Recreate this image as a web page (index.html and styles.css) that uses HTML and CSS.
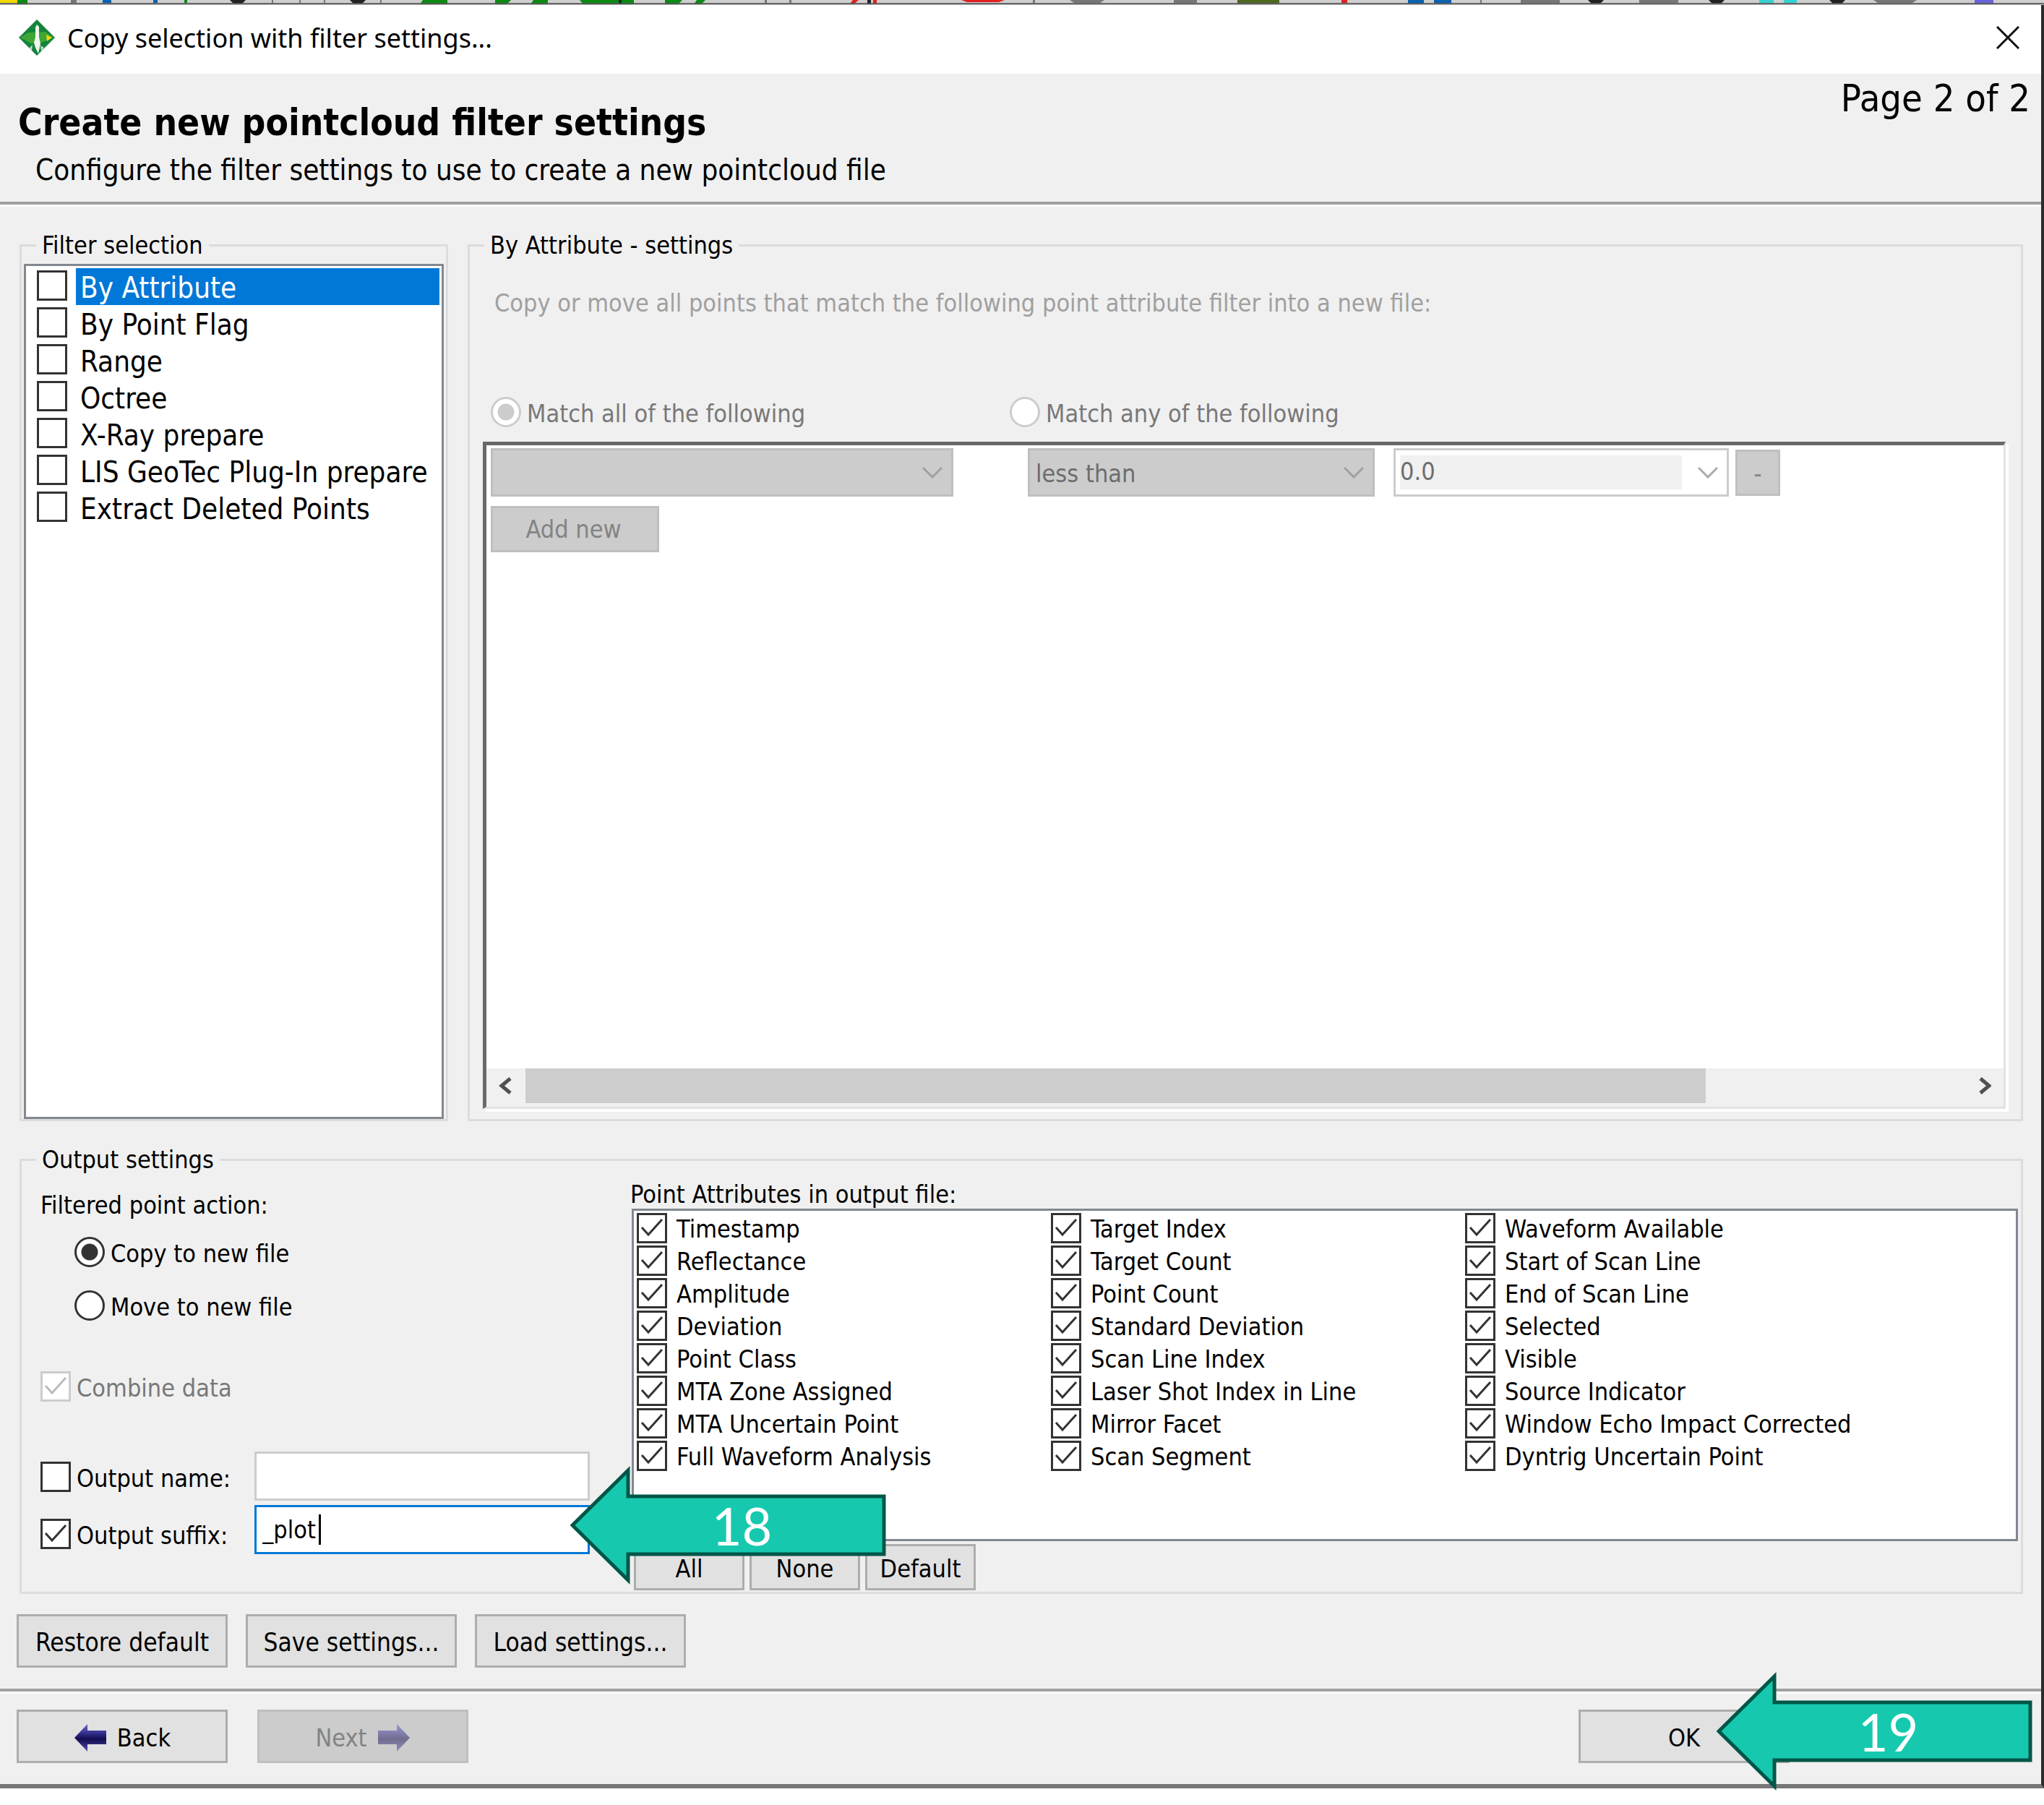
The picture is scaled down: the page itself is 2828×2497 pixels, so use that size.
FILE: index.html
```html
<!DOCTYPE html>
<html lang="en">
<head>
<meta charset="utf-8">
<title>Copy selection with filter settings...</title>
<link rel="stylesheet" href="styles.css">
</head>
<body>
<svg class="app-toolbar" viewBox="0 0 2828 7" preserveAspectRatio="none" aria-hidden="true">
  <rect width="2828" height="7" fill="#cfcfcf"/>
  <path fill="#f2d800" d="M0 0h24v4H0z"/>
  <path fill="#0a8a12" d="M24 0h14v6H24zM255 0h4v4h-4zM585 0h34v6h-38zM685 0h22l-6 6h-16zM738 0h20v6h-24zM802 0h75v6h-70zM920 0h24l-6 6h-18zM964 0h12l-6 6h-10z"/>
  <path fill="#222" d="M318 0h22l-5 5h-12zM484 0h22l-5 5h-12zM856 0h4v6h-4zM1200 0h5v6h-5zM2197 0h22l-5 5h-12zM2364 0h22l-5 5h-12zM2531 0h22l-5 5h-12z"/>
  <path fill="#777" d="M98 0h8v4h-8zM376 0h2v4h-2zM414 0h2v4h-2zM448 0h2v4h-2zM526 0h2v4h-2zM1058 0h3v4h-3zM1092 0h3v4h-3zM1429 0h3v4h-3zM1480 0h48l-6 4h-36zM1624 0h32v4h-32zM2048 0h2v4h-2zM2104 0h54v4h-54zM2268 0h54v4h-54zM2592 0h60l-6 4h-48z"/>
  <path fill="#e02020" d="M1180 0h8l-6 5h-6zM1208 0h5v5h-5zM1330 0h60l-8 3h-44zM1856 0h8v4h-8z"/>
  <path fill="#4d6820" d="M1712 0h58v5h-58z"/>
  <path fill="#0b62b0" d="M142 0h12v4h-12zM212 0h6v4h-6zM1948 0h22v5h-22zM1984 0h24v5h-24z"/>
  <path fill="#35d0d0" d="M2434 0h20v4h-20zM2468 0h18v4h-18z"/>
  <path fill="#6a62d8" d="M2732 0h26v5h-26z"/>
  <rect y="4" width="2828" height="2" fill="#555" opacity=".85"/>
  <rect y="6" width="2828" height="1" fill="#bbb"/>
</svg>

<main class="dialog">
  <header class="titlebar">
    <svg class="app-icon" viewBox="0 0 52 52" aria-hidden="true">
      <path d="M26 1 51 26 26 51 1 26z" fill="#14833c"/>
      <path d="M3 26 14 19 38 18 49 26 30 34H18z" fill="#3fa535"/>
      <path d="M39 22l8 4-7 5z" fill="#e8d80e"/>
      <path d="M26 8l3 3v14l2 10-3 13-4-8-2-7 2-8V12z" fill="#eef6ee"/>
      <path d="M20 36l-5 5 4 3zM31 37l5 3-4 5z" fill="#b9dcbc"/>
    </svg>
    <span class="titlebar-text">Copy selection with filter settings...</span>
    <button class="close" type="button" aria-label="Close">
      <svg viewBox="0 0 32 32" aria-hidden="true"><path d="M1 1 31 31M31 1 1 31" fill="none" stroke="#111" stroke-width="3"/></svg>
    </button>
  </header>

  <section class="heading">
    <div class="heading-text">
      <h1>Create new pointcloud filter settings</h1>
      <p>Configure the filter settings to use to create a new pointcloud file</p>
    </div>
    <span class="page-count">Page 2 of 2</span>
  </section>
  <hr class="rule">

  <form class="content">
    <div class="filters">
      <fieldset class="group filter-group">
        <legend>Filter selection</legend>
        <ul class="filter-list">
          <li class="selected"><input type="checkbox" id="f1"><label for="f1">By Attribute</label></li>
          <li><input type="checkbox" id="f2"><label for="f2">By Point Flag</label></li>
          <li><input type="checkbox" id="f3"><label for="f3">Range</label></li>
          <li><input type="checkbox" id="f4"><label for="f4">Octree</label></li>
          <li><input type="checkbox" id="f5"><label for="f5">X-Ray prepare</label></li>
          <li><input type="checkbox" id="f6"><label for="f6">LIS GeoTec Plug-In prepare</label></li>
          <li><input type="checkbox" id="f7"><label for="f7">Extract Deleted Points</label></li>
        </ul>
      </fieldset>

      <fieldset class="group attribute-group">
        <legend>By Attribute - settings</legend>
        <p class="hint">Copy or move all points that match the following point attribute filter into a new file:</p>
        <div class="match">
          <span class="option"><input type="radio" name="match" id="m1" checked disabled><label for="m1">Match all of the following</label></span>
          <span class="option"><input type="radio" name="match" id="m2" disabled><label for="m2">Match any of the following</label></span>
        </div>
        <div class="conditions">
          <div class="condition">
            <select class="combo attribute" aria-label="Attribute" disabled><option></option></select>
            <select class="combo operator" aria-label="Comparison" disabled><option>less than</option></select>
            <div class="combo-edit">
              <input type="text" value="0.0" aria-label="Value" disabled>
              <svg viewBox="0 0 28 16" aria-hidden="true"><path d="M1 1 14 14 27 1" fill="none" stroke="#aaa" stroke-width="3"/></svg>
            </div>
            <button class="btn minus" type="button" disabled>-</button>
          </div>
          <button class="btn add" type="button" disabled>Add new</button>
          <div class="scrollbar">
            <button type="button" aria-label="Scroll left"><svg viewBox="0 0 20 24" aria-hidden="true"><path d="M16 2 4 12 16 22" fill="none" stroke="#505050" stroke-width="5"/></svg></button>
            <div class="track"><div class="thumb"></div></div>
            <button type="button" aria-label="Scroll right"><svg viewBox="0 0 20 24" aria-hidden="true"><path d="M5 2 17 12 5 22" fill="none" stroke="#505050" stroke-width="5"/></svg></button>
          </div>
        </div>
      </fieldset>
    </div>

    <fieldset class="group output-group">
      <legend>Output settings</legend>
      <div class="output">
        <div class="output-left">
          <p class="caption">Filtered point action:</p>
          <div class="actions">
            <span class="option"><input type="radio" name="action" id="a1" checked><label for="a1">Copy to new file</label></span>
            <span class="option"><input type="radio" name="action" id="a2"><label for="a2">Move to new file</label></span>
          </div>
          <span class="option combine"><input type="checkbox" id="combine" checked disabled><label for="combine">Combine data</label></span>
          <div class="field">
            <span class="option"><input type="checkbox" id="on"><label for="on">Output name:</label></span>
            <input class="text" type="text" aria-label="Output name">
          </div>
          <div class="field suffix">
            <span class="option"><input type="checkbox" id="os" checked><label for="os">Output suffix:</label></span>
            <span class="text focused"><input type="text" value="_plot" size="4" aria-label="Output suffix"><i class="caret"></i></span>
            <div class="callout callout-suffix">
              <svg viewBox="0 0 437 168" aria-hidden="true"><path d="M3 84 80 8V44H434V124H80V160z" fill="#16c9ae" stroke="#005648" stroke-width="5"/></svg>
              <span>18</span>
            </div>
          </div>
        </div>

        <div class="output-right">
          <p class="caption">Point Attributes in output file:</p>
          <div class="attributes">
            <div class="column">
              <span class="option"><input type="checkbox" id="p1" checked><label for="p1">Timestamp</label></span>
              <span class="option"><input type="checkbox" id="p2" checked><label for="p2">Reflectance</label></span>
              <span class="option"><input type="checkbox" id="p3" checked><label for="p3">Amplitude</label></span>
              <span class="option"><input type="checkbox" id="p4" checked><label for="p4">Deviation</label></span>
              <span class="option"><input type="checkbox" id="p5" checked><label for="p5">Point Class</label></span>
              <span class="option"><input type="checkbox" id="p6" checked><label for="p6">MTA Zone Assigned</label></span>
              <span class="option"><input type="checkbox" id="p7" checked><label for="p7">MTA Uncertain Point</label></span>
              <span class="option"><input type="checkbox" id="p8" checked><label for="p8">Full Waveform Analysis</label></span>
            </div>
            <div class="column">
              <span class="option"><input type="checkbox" id="p9" checked><label for="p9">Target Index</label></span>
              <span class="option"><input type="checkbox" id="p10" checked><label for="p10">Target Count</label></span>
              <span class="option"><input type="checkbox" id="p11" checked><label for="p11">Point Count</label></span>
              <span class="option"><input type="checkbox" id="p12" checked><label for="p12">Standard Deviation</label></span>
              <span class="option"><input type="checkbox" id="p13" checked><label for="p13">Scan Line Index</label></span>
              <span class="option"><input type="checkbox" id="p14" checked><label for="p14">Laser Shot Index in Line</label></span>
              <span class="option"><input type="checkbox" id="p15" checked><label for="p15">Mirror Facet</label></span>
              <span class="option"><input type="checkbox" id="p16" checked><label for="p16">Scan Segment</label></span>
            </div>
            <div class="column">
              <span class="option"><input type="checkbox" id="p17" checked><label for="p17">Waveform Available</label></span>
              <span class="option"><input type="checkbox" id="p18" checked><label for="p18">Start of Scan Line</label></span>
              <span class="option"><input type="checkbox" id="p19" checked><label for="p19">End of Scan Line</label></span>
              <span class="option"><input type="checkbox" id="p20" checked><label for="p20">Selected</label></span>
              <span class="option"><input type="checkbox" id="p21" checked><label for="p21">Visible</label></span>
              <span class="option"><input type="checkbox" id="p22" checked><label for="p22">Source Indicator</label></span>
              <span class="option"><input type="checkbox" id="p23" checked><label for="p23">Window Echo Impact Corrected</label></span>
              <span class="option"><input type="checkbox" id="p24" checked><label for="p24">Dyntrig Uncertain Point</label></span>
            </div>
          </div>
          <div class="presets">
            <button class="btn" type="button">All</button>
            <button class="btn" type="button">None</button>
            <button class="btn" type="button">Default</button>
          </div>
        </div>
      </div>
    </fieldset>

    <div class="settings-bar">
      <button class="btn wide" type="button">Restore default</button>
      <button class="btn wide" type="button">Save settings...</button>
      <button class="btn wide" type="button">Load settings...</button>
    </div>
  </form>

  <hr class="rule">
  <footer class="nav">
    <button class="btn wide" type="button">
      <svg class="arrow" viewBox="0 0 46 40" aria-hidden="true">
        <defs><linearGradient id="navy" x2="0" y2="1"><stop offset="0" stop-color="#6b66c4"/><stop offset=".3" stop-color="#3a3596"/><stop offset=".55" stop-color="#120c50"/><stop offset="1" stop-color="#5550b4"/></linearGradient></defs>
        <path d="M1 20 19 1v9h26v19H19v10z" fill="url(#navy)"/>
      </svg>
      Back
    </button>
    <button class="btn wide" type="button" disabled>
      Next
      <svg class="arrow" viewBox="0 0 46 40" aria-hidden="true">
        <path d="M45 20 27 1v9H1v19h26v10z" fill="url(#navy)" opacity=".5"/>
      </svg>
    </button>
    <button class="btn wide ok" type="button">OK</button>
    <div class="callout callout-ok">
      <svg viewBox="0 0 437 168" aria-hidden="true"><path d="M3 84 80 8V44H434V124H80V160z" fill="#16c9ae" stroke="#005648" stroke-width="5"/></svg>
      <span>19</span>
    </div>
  </footer>
</main>
</body>
</html>
```
FILE: styles.css
```css
:root {
  --face: #f0f0f0;
  --group-line: #dcdcdc;
  --list-line: #828790;
  --accent: #0078d7;
  --ui: "DejaVu Sans Condensed", "DejaVu Sans", sans-serif;
}

* { box-sizing: border-box; }

body {
  margin: 0;
  min-height: 100vh;
  padding-bottom: 23px;
  display: flex;
  flex-direction: column;
  background: #fff;
  color: #000;
  font: 34px/40px var(--ui);
}

p, h1, ul { margin: 0; padding: 0; }
input, button, select { font: inherit; color: inherit; margin: 0; }

.app-toolbar { display: block; width: 100%; height: 7px; }

.dialog {
  flex: 1;
  display: flex;
  flex-direction: column;
  background: var(--face);
  border-right: 4px solid #2b2b2b;
  border-bottom: 6px solid #777;
}

/* Title bar */
.titlebar {
  display: flex;
  align-items: center;
  height: 95px;
  padding: 0 30px 6px 25px;
  background: #fff;
}
.app-icon { width: 52px; height: 52px; margin-right: 16px; }
.titlebar-text { flex: 1; font: 36px/48px "Noto Sans", sans-serif; padding-top: 2px; }
.close { width: 32px; height: 32px; padding: 0; border: 0; background: none; }
.close svg { display: block; width: 32px; height: 32px; }

/* Heading */
.heading {
  display: flex;
  justify-content: space-between;
  height: 177px;
  padding: 0 15px 0 25px;
}
.heading-text { padding-top: 38px; }
h1 { font-size: 51px; line-height: 60px; font-weight: bold; }
.heading-text p { padding: 10px 0 0 24px; font-size: 40px; line-height: 50px; }
.page-count { font-size: 52px; line-height: 64px; padding-top: 2px; }

.rule {
  width: 100%;
  height: 7px;
  margin: 0;
  border: 0;
  border-top: 4px solid #a0a0a0;
  background: #fff;
}

/* Groups */
.content { flex: 1; display: flex; flex-direction: column; padding: 33px 25px 29px 23px; }
.group { --pad: 3px; margin: 0; border: 3px solid var(--group-line); min-width: 0; }
.group legend { margin-left: calc(20px - var(--pad)); padding: 0 8px; line-height: 40px; }
.filters { flex: 1; display: flex; gap: 27px; margin-left: 4px; }

.filter-group { width: 593px; display: flex; padding: 6px 3px 0 var(--pad); }
.filter-list {
  flex: 1;
  min-width: 0;
  padding: 3px 3px 2px;
  list-style: none;
  background: #fff;
  border: 3px solid var(--list-line);
  font-size: 40px;
}
.filter-list li { display: flex; gap: 12px; height: 51px; padding-left: 12px; }
.filter-list input { margin-top: 3px; }
.filter-list label { flex: 1; padding-left: 6px; line-height: 55px; overflow: hidden; white-space: nowrap; }
.filter-list .selected label { background: var(--accent); color: #fff; }

.attribute-group { --pad: 18px; flex: 1; display: flex; flex-direction: column; padding: 40px 17px 10px var(--pad); }
.hint { padding-left: 16px; color: #a0a0a0; }
.match { display: grid; grid-template-columns: 718px 1fr; padding: 110px 0 20px 11px; }

/* Check boxes and radios */
.option { display: flex; align-items: center; }
.option label { padding: 3px 0 0 8px; line-height: 36px; white-space: nowrap; }
input[type="checkbox"], input[type="radio"] {
  appearance: none;
  flex: none;
  width: 42px;
  height: 42px;
  border: 3px solid #333;
  background: #fff center / 36px 36px no-repeat;
}
input[type="radio"] { border-radius: 50%; }
input[type="checkbox"]:checked {
  background-image: url("data:image/svg+xml,%3Csvg xmlns='http://www.w3.org/2000/svg' viewBox='0 0 36 36'%3E%3Cpath d='M4 17l9 10L32 6' fill='none' stroke='%23333' stroke-width='3'/%3E%3C/svg%3E");
}
input[type="radio"]:checked { background-image: radial-gradient(circle, #333 11px, transparent 12px); }
input:disabled + label { color: #787878; }
input[type="checkbox"]:disabled, input[type="radio"]:disabled { border-color: #ccc; }
input[type="checkbox"]:disabled:checked {
  background-image: url("data:image/svg+xml,%3Csvg xmlns='http://www.w3.org/2000/svg' viewBox='0 0 36 36'%3E%3Cpath d='M4 17l9 10L32 6' fill='none' stroke='%23bbb' stroke-width='3'/%3E%3C/svg%3E");
}
input[type="radio"]:disabled:checked { background-image: radial-gradient(circle, #ccc 11px, transparent 12px); }

/* Conditions box */
.conditions {
  flex: 1;
  display: flex;
  flex-direction: column;
  align-items: flex-start;
  padding-top: 4px;
  background: #fff;
  border: solid;
  border-width: 5px 3px 3px 5px;
  border-color: #696969 #e3e3e3 #e3e3e3 #696969;
  box-shadow: 4px 4px 0 #fff;
  margin-right: 4px;
  margin-bottom: 4px;
}
.condition { display: flex; align-items: center; padding-left: 6px; margin-bottom: 13px; }
.combo {
  appearance: none;
  height: 67px;
  padding: 2px 8px 0;
  border: 3px solid #bfbfbf;
  border-radius: 0;
  opacity: 1;
  color: #6d6d6d;
  background: #ccc url("data:image/svg+xml,%3Csvg xmlns='http://www.w3.org/2000/svg' viewBox='0 0 28 16'%3E%3Cpath d='M1 1 14 14 27 1' fill='none' stroke='%23a0a0a0' stroke-width='3'/%3E%3C/svg%3E") right 12px center / 28px 16px no-repeat;
}
.attribute { width: 640px; margin-right: 103px; }
.operator { width: 480px; margin-right: 26px; }
.combo-edit {
  display: flex;
  align-items: center;
  justify-content: space-between;
  width: 464px;
  height: 67px;
  padding: 0 12px 0 6px;
  border: 3px solid #ccc;
  background: #fff;
}
.combo-edit input { width: 390px; height: 47px; padding: 0 0 3px; border: 0; background: var(--face); color: #6d6d6d; }
.combo-edit svg { width: 28px; height: 16px; }

.scrollbar { display: flex; width: 100%; height: 53px; margin-top: auto; padding-bottom: 5px; background: var(--face); }
.scrollbar button { width: 54px; padding: 0; border: 0; background: none; }
.scrollbar svg { display: block; width: 20px; height: 24px; margin: 0 auto; }
.track { flex: 1; display: flex; }
.thumb { width: 82%; background: #cdcdcd; }

/* Buttons */
.btn {
  display: flex;
  align-items: center;
  justify-content: center;
  height: 64px;
  padding: 3px 0 0;
  border: 3px solid #adadad;
  border-radius: 0;
  background: #e1e1e1;
}
.btn:disabled { border-color: #bfbfbf; background: #ccc; color: #838383; }
.minus { width: 62px; margin-left: 9px; }
.add { width: 233px; margin-left: 6px; padding: 0 4px 0 0; }
.wide { width: 292px; height: 74px; gap: 14px; }

/* Output settings */
.output-group { --pad: 26px; margin: 33px 0 0 4px; padding: 8px 4px 2px var(--pad); }
.output { display: flex; }
.output-left { width: 818px; padding-top: 15px; }
.output-right { flex: 1; }
.actions { display: grid; gap: 32px; padding: 24px 0 0 47px; }
.combine { margin-top: 70px; }
.field { position: relative; display: flex; align-items: center; height: 68px; margin-top: 69px; }
.field + .field { margin-top: 6px; }
.field .option { width: 296px; padding-top: 2px; }
.suffix .option { padding-top: 12px; }
.text { width: 464px; height: 68px; padding: 0 8px; border: 3px solid #ccc; background: #fff; }
.focused { display: flex; align-items: center; border-color: var(--accent); }
.focused input { width: 78px; height: 50px; padding: 0; border: 0; outline: 0; background: none; }
.caret { width: 3px; height: 42px; background: #000; }

.output-right .caption { margin-left: -2px; }
.attributes {
  display: grid;
  grid-template-columns: 573px 573px 1fr;
  height: 460px;
  padding: 1px 4px;
  background: #fff;
  border: 3px solid var(--list-line);
}
.attributes .option { height: 45px; }
.attributes label { padding-left: 13px; }
.presets { display: flex; gap: 7px; padding: 4px 0 0 3px; }
.presets .btn { width: 153px; }

.settings-bar { display: flex; gap: 25px; padding-top: 28px; font-size: 35px; }

/* Footer */
.nav { position: relative; display: flex; gap: 41px; padding: 22px 348px 29px 23px; }
.arrow { width: 46px; height: 40px; }
.ok { margin-left: auto; }

/* Numbered arrows laid over the dialog */
.callout { position: absolute; display: flex; align-items: center; justify-content: center; width: 437px; height: 168px; }
.callout svg { position: absolute; width: 437px; height: 168px; }
.callout span { position: relative; color: #fff; font: 72px/80px Lato, sans-serif; padding-left: 38px; }
.callout-suffix { left: 733px; top: -56px; z-index: 1; }
.callout-ok { right: 12px; top: -32px; }
```
